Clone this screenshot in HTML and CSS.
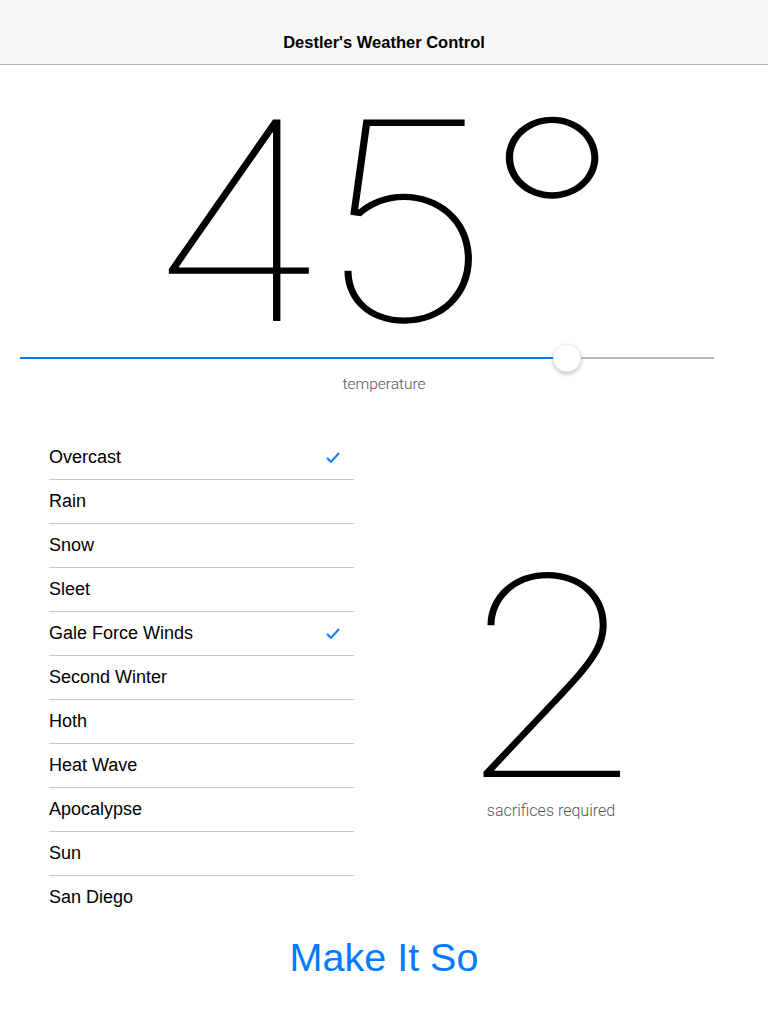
FILE: index.html
```html
<!DOCTYPE html>
<html>
<head>
<meta charset="utf-8">
<link rel="stylesheet" href="styles.css">
</head>
<body>
<header class="navbar">
  <div class="nav-title">Destler's Weather Control</div>
</header>
<main class="content">
  <div class="temp">45°</div>
  <div class="slider">
    <div class="track-fill" style="width: 540px"></div>
    <div class="thumb"></div>
    <div class="track-rest"></div>
  </div>
  <div class="caption temp-caption">temperature</div>
  <div class="columns">
    <ul class="conditions">
      <li class="row">Overcast<svg class="check" viewBox="0 0 14 11" width="14" height="11"><path d="M1 6 L5 9.8 L13 1" fill="none" stroke="#007aff" stroke-width="2"/></svg></li>
      <li class="row">Rain</li>
      <li class="row">Snow</li>
      <li class="row">Sleet</li>
      <li class="row">Gale Force Winds<svg class="check" viewBox="0 0 14 11" width="14" height="11"><path d="M1 6 L5 9.8 L13 1" fill="none" stroke="#007aff" stroke-width="2"/></svg></li>
      <li class="row">Second Winter</li>
      <li class="row">Hoth</li>
      <li class="row">Heat Wave</li>
      <li class="row">Apocalypse</li>
      <li class="row">Sun</li>
      <li class="row">San Diego</li>
    </ul>
    <div class="sacrifices">
      <div class="count">2</div>
      <div class="caption count-caption">sacrifices required</div>
    </div>
  </div>
  <button class="action">Make It So</button>
</main>
</body>
</html>
```

FILE: styles.css
```css
* { box-sizing: border-box; }
html, body { margin: 0; padding: 0; background: #fff; }
body {
  width: 768px;
  height: 1024px;
  overflow: hidden;
  font-family: "Liberation Sans", Arial, sans-serif;
  color: #000;
}
.navbar {
  height: 65px;
  padding-top: 20px;
  background: #f7f7f7;
  border-bottom: 1px solid #b2b2b2;
  display: flex;
  align-items: center;
  justify-content: center;
}
.nav-title {
  font-size: 16.5px;
  font-weight: bold;
  line-height: 44px;
}
.content {
  display: flex;
  flex-direction: column;
  align-items: center;
}
.temp {
  font-family: "Inter", sans-serif;
  font-weight: 100;
  font-size: 277px;
  line-height: 0.73em;
  height: 206px;
  margin-top: 55px;
  letter-spacing: -12px;
  padding-right: 11px;
  transform: scaleX(1.13);
}
.slider {
  align-self: flex-start;
  margin-left: 20px;
  width: 694px;
  height: 30px;
  display: flex;
  align-items: center;
  margin-top: 17px;
}
.track-fill {
  height: 2px;
  background: #007aff;
  flex: none;
}
.thumb {
  width: 28px;
  height: 28px;
  border-radius: 50%;
  background: #fff;
  border: 1px solid rgba(0,0,0,0.06);
  box-shadow: 0 2px 4px rgba(0,0,0,0.25);
  margin-left: -7px;
  flex: none;
}
.track-rest {
  flex: 1;
  height: 2px;
  background: #b7b7b7;
}
.caption {
  font-family: "Roboto", "Liberation Sans", sans-serif;
  font-weight: 300;
  font-size: 15.5px;
  line-height: 18px;
  color: #555;
}
.temp-caption {
  margin-top: 2px;
}
.columns {
  align-self: stretch;
  display: flex;
  padding: 0 20px 0 49px;
  margin-top: 43px;
}
.conditions {
  list-style: none;
  margin: 0;
  padding: 0;
  width: 305px;
}
.row {
  height: 44px;
  border-bottom: 1px solid #c8c7cc;
  display: flex;
  align-items: center;
  justify-content: space-between;
  padding-right: 14px;
  font-size: 18px;
}
.row:last-child { border-bottom: none; height: 43px; }
.check { flex: none; }
.sacrifices {
  flex: 1;
  display: flex;
  flex-direction: column;
  align-items: center;
  padding-top: 139px;
}
.count {
  font-family: "Inter", sans-serif;
  font-weight: 100;
  font-size: 278px;
  line-height: 0.73em;
  height: 205px;
  transform: scaleX(1.12);
}
.count-caption {
  margin-top: 22px;
  font-size: 16px;
}
.action {
  margin-top: 14px;
  background: none;
  border: none;
  padding: 0;
  font-family: "Liberation Sans", Arial, sans-serif;
  font-size: 39.5px;
  color: #007aff;
  line-height: 48px;
}
```
